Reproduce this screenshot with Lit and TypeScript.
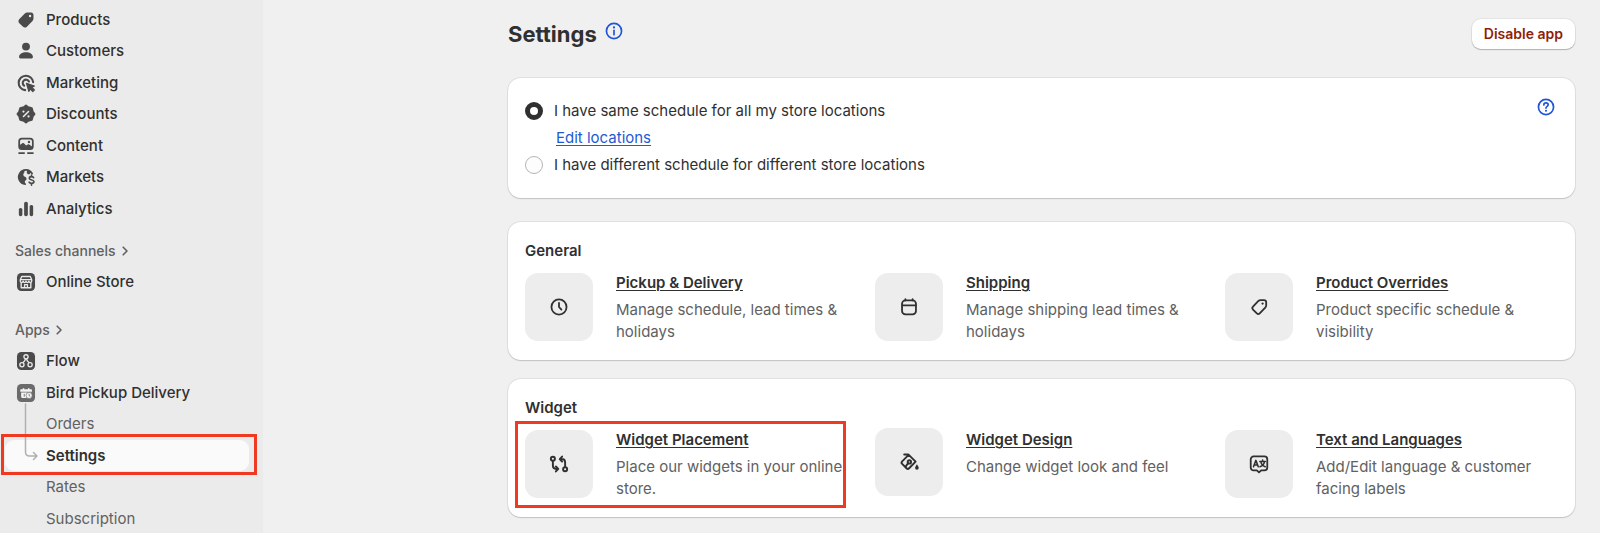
import { LitElement, html, css, svg, nothing } from "lit";
import { customElement, property } from "lit/decorators.js";

const icons: Record<string, unknown> = {
  products: svg`<path fill="currentColor" fill-rule="evenodd" d="M11.600 3.200h3.100c1.200 0 2.100.9 2.100 2.100v3.200c0 .9-.3 1.700-.9 2.300l-5.100 5.300c-1 1-2.500 1-3.500.1l-3.400-3.300c-1-1-1-2.500-.1-3.500l4.900-5c.7-.8 1.800-1.200 2.900-1.200Zm2.100 4.200a1.100 1.100 0 1 0 0-2.200 1.100 1.100 0 0 0 0 2.200Z"/>`,
  customers: svg`<g fill="currentColor"><circle cx="10" cy="6" r="3.600"/><path d="M3.700 15.500c0-2.900 2.800-4.400 6.300-4.400s6.300 1.500 6.300 4.400c0 .8-.5 1.300-1.300 1.300H5c-.8 0-1.300-.5-1.300-1.300Z"/></g>`,
  marketing: svg`<g fill="none" stroke="currentColor" stroke-width="1.900" stroke-linecap="round"><path d="M9.200 16.500A6.600 6.600 0 1 1 16.500 9.200"/><path d="M8.300 12.400A3 3 0 1 1 12.700 8.600"/></g><path fill="currentColor" stroke="currentColor" stroke-width="1" stroke-linejoin="round" d="m10.400 10.300 7.200 2.400-2.200 1.300 2.300 2.300-1.500 1.500-2.300-2.300-1.300 2.200Z"/>`,
  discounts: svg`<path fill="currentColor" stroke="currentColor" stroke-width="1.900" stroke-linejoin="round" d="m10 2.400 2 1.500 3.200.9.900 3.200 1.500 2-1.500 2-.9 3.200-3.200.9-2 1.500-2-1.500-3.200-.9-.9-3.200-1.500-2 1.500-2 .9-3.200 3.200-.9Z"/><path stroke="#ebebeb" stroke-width="1.400" stroke-linecap="round" d="m7.700 12.300 4.600-4.600"/><circle cx="7.700" cy="7.800" r="1" fill="#ebebeb"/><circle cx="12.300" cy="12.200" r="1" fill="#ebebeb"/>`,
  content: svg`<rect x="3.800" y="3.300" width="12.400" height="9.600" rx="2.400" fill="none" stroke="currentColor" stroke-width="1.600"/><path fill="currentColor" d="M4 9.400 6.700 7.500c.5-.3 1-.3 1.400.1l2 2 1.500-1c.4-.3.9-.3 1.300 0l3 2.100-.9 2H5L4 11.500Z"/><circle cx="12.700" cy="6.300" r="1.100" fill="currentColor"/><path stroke="currentColor" stroke-width="1.600" stroke-linecap="round" d="M3.700 16.400h4.600M11.700 16.400h4.600"/>`,
  markets: svg`<path fill="none" stroke="currentColor" stroke-width="1.600" stroke-linecap="round" d="M9.300 16.500A6.500 6.500 0 1 1 15.600 6.900"/><path fill="currentColor" d="M3.300 8.700 5 5.500 8 3.600l.7 1.900-1.200 2 .4 1.700 2.300 1.300.3 1.700-1.600 1.700.3 2.500-2.800-.6-2.500-2.600ZM11.200 3.400l-.6 2.500 1 1.700 1.700-.2 1.200-1.700-1.200-1.800Z"/><path fill="none" stroke="currentColor" stroke-width="1.500" stroke-linecap="round" d="M16.900 10.600c-.4-.7-1.100-.9-1.900-.9-1.200 0-2 .6-2 1.500 0 2.200 4.200.9 4.200 3 0 1-.9 1.600-2.200 1.600-1 0-1.800-.4-2.200-1.100M15 8.300v1.300M15 16v1.500"/>`,
  analytics: svg`<g fill="currentColor"><rect x="3.500" y="9" width="3.200" height="7.500" rx="1.500"/><rect x="8.300" y="3.300" width="3.400" height="13.200" rx="1.600"/><rect x="13.300" y="6.300" width="3.200" height="10.200" rx="1.500"/></g>`,
  store: svg`<rect x="1.800" y="1.800" width="16.400" height="16.400" rx="4" fill="#4a4a4a"/><g fill="none" stroke="#ebebeb" stroke-width="1.200" stroke-linejoin="round"><path d="M6.100 5h7.800l1.300 3v1.200a1.300 1.300 0 0 1-2.600 0 1.300 1.300 0 0 1-2.600 0 1.300 1.300 0 0 1-2.600 0 1.300 1.300 0 0 1-2.600 0V8ZM4.900 7.800h10.200M5.600 10.500v4.700h8.800v-4.700M8.700 15v-2.600h2.600V15"/></g>`,
  flow: svg`<rect x="1.800" y="1.800" width="16.400" height="16.400" rx="4" fill="#4a4a4a"/><g fill="none" stroke="#ebebeb" stroke-width="1.200"><circle cx="10" cy="6.200" r="1.900"/><circle cx="6.300" cy="13.400" r="1.900"/><circle cx="13.700" cy="13.400" r="1.900"/><path d="M9.500 8.100C9.300 10 8.500 10.500 7.100 11.600M10.500 8.100c.2 1.900 1 2.400 2.400 3.500"/></g>`,
  bird: svg`<rect x="1.800" y="1.800" width="16.400" height="16.400" rx="4" fill="#6b6b6b"/><path fill="#f5f5f5" d="M5.700 6.600h1.300V5.700h1.400v.9h3.400v-.9h1.400v.9h1.300c.5 0 .9.4.9.9v1.300H4.800V7.500c0-.5.4-.9.9-.9ZM5.600 9.600h9.200v4.900H6.600c-.6 0-1-.4-1-1Z"/><circle cx="12.800" cy="12.300" r="2.800" fill="#f5f5f5" stroke="#6b6b6b" stroke-width=".6"/><path fill="none" stroke="#6b6b6b" stroke-width=".8" d="M12.800 11v1.400l1 .6M8.400 10.800v2.600"/>`,
  chevron: svg`<path fill="none" stroke="currentColor" stroke-width="1.800" stroke-linecap="round" stroke-linejoin="round" d="m8 5.800 4.200 4.200L8 14.200"/>`,
  info: svg`<circle cx="10" cy="10" r="6.300" fill="none" stroke="currentColor" stroke-width="1.400"/><path stroke="currentColor" stroke-width="1.400" stroke-linecap="round" d="M10 9.500v3.600"/><circle cx="10" cy="7" r=".95" fill="currentColor"/>`,
  help: svg`<circle cx="10" cy="10" r="6.300" fill="none" stroke="currentColor" stroke-width="1.400"/><path fill="none" stroke="currentColor" stroke-width="1.400" stroke-linecap="round" d="M8.200 8.300c0-1 .8-1.700 1.800-1.700s1.800.7 1.800 1.600c0 1.300-1.800 1.300-1.800 2.700"/><circle cx="10" cy="13.100" r=".9" fill="currentColor"/>`,
  clock: svg`<g fill="none" stroke="currentColor" stroke-width="1.500" stroke-linecap="round" stroke-linejoin="round"><circle cx="10" cy="10" r="6.300"/><path d="M10 6.500V10l2 2.200"/></g>`,
  calendar: svg`<g fill="none" stroke="currentColor" stroke-width="1.500" stroke-linecap="round"><rect x="4.200" y="4.400" width="11.600" height="11.800" rx="2.800"/><path d="M4.500 8.600h11M7 3.500v1M13 3.500v1"/></g>`,
  tag: svg`<path fill="none" stroke="currentColor" stroke-width="1.500" stroke-linejoin="round" d="M11.500 4.200h2.600c1.100 0 1.900.8 1.900 1.900v2.400c0 .8-.3 1.500-.8 2.100l-4.600 4.700c-.7.700-1.700.7-2.400 0l-3.200-3.200c-.7-.7-.7-1.700 0-2.400l4.300-4.600c.6-.6 1.400-.9 2.200-.9Z"/><circle cx="13" cy="7.100" r=".95" fill="currentColor"/>`,
  compare: svg`<g fill="none" stroke="currentColor" stroke-width="1.600" stroke-linecap="round" stroke-linejoin="round"><circle cx="4.900" cy="5.600" r="1.700"/><circle cx="15.100" cy="14.400" r="1.700"/><path d="M4.900 7.400v3.900c0 1.800 1.100 2.800 2.800 2.800h1.200M7.400 12 9.400 14.100l-2 2.100M15.100 12.600V8.700c0-1.800-1.100-2.800-2.800-2.800h-1.200M12.600 3.800 10.600 5.900l2 2.100"/></g>`,
  paint: svg`<g fill="none" stroke="currentColor" stroke-width="1.600" stroke-linecap="round" stroke-linejoin="round"><path d="M6 3.800h3.600l5.900 5.900-5.400 5.500c-.7.700-1.500.7-2.200 0l-3.600-3.600c-.7-.7-.7-1.400 0-2.100l5.200-5.200"/><circle cx="10.300" cy="9.900" r="1.400"/><path d="m9.300 11-2 2.600"/></g><path fill="currentColor" d="M16.600 11.800c1 1.400 1.500 2.300 1.500 3.200a1.500 1.500 0 0 1-3 0c0-.9.5-1.800 1.500-3.200Z"/>`,
  language: svg`<g fill="none" stroke="currentColor" stroke-linecap="round" stroke-linejoin="round"><path stroke-width="1.500" d="M5.500 3.700h9a2.400 2.400 0 0 1 2.400 2.400v6.800a2.400 2.400 0 0 1-2.400 2.400h-2.700L10 17l-1.800-1.700H5.500a2.400 2.400 0 0 1-2.400-2.400V6.100a2.400 2.400 0 0 1 2.400-2.400Z"/><path stroke-width="1.300" d="m5.400 12.300 2-5.300 2 5.300M6.200 10.800h2.500M10.700 7.900h4.600M13 6.600v1.300M14.600 8.100c-.3 2-1.700 3.400-3.800 4.200M11.500 8.100c.3 2 1.600 3.400 3.700 4.200"/></g>`,
};

@customElement("ui-icon")
export class UiIcon extends LitElement {
  @property() name = "";

  static styles = css`
    :host {
      display: block;
      flex: none;
      width: 22px;
      height: 22px;
    }
    .glyph {
      display: block;
      width: 100%;
      height: 100%;
    }
  `;

  render() {
    return html`<svg class="glyph" viewBox="0 0 20 20" aria-hidden="true">${icons[this.name] ?? nothing}</svg>`;
  }
}

@customElement("side-nav")
export class SideNav extends LitElement {
  static styles = css`
    :host {
      display: block;
      flex: none;
      box-sizing: border-box;
      width: 263px;
      padding: 4px 14px 0 5px;
      background: #ebebeb;
    }
    .group {
      display: grid;
      grid-auto-rows: 31px 32px;
    }
    .channels {
      margin-top: 11px;
    }
    .apps {
      margin-top: 16px;
    }
    .heading {
      display: flex;
      align-items: center;
      margin: 0;
      padding-left: 10px;
      font-size: 14px;
      font-weight: 500;
      color: #616161;
    }
    .heading ui-icon {
      width: 18px;
      height: 18px;
    }
    .item {
      position: relative;
      display: flex;
      align-items: center;
      gap: 9px;
      padding-left: 10px;
      border-radius: 9px;
      color: #303030;
      font-weight: 500;
      text-decoration: none;
    }
    .item ui-icon {
      color: #4a4a4a;
    }
    .sub {
      padding-left: 41px;
      color: #616161;
      font-weight: 400;
    }
    .current {
      background: #fafafa;
      color: #303030;
      font-weight: 600;
    }
    .branch {
      position: absolute;
      left: 18px;
      bottom: 8px;
      width: 16px;
      height: 60px;
    }
    .highlight {
      position: absolute;
      inset: -6px -8px -4px -4px;
      border: 3px solid #ef3a21;
      pointer-events: none;
    }
  `;

  private item(icon: string, label: string) {
    return html`<a class="item" href="#"><ui-icon name=${icon}></ui-icon>${label}</a>`;
  }

  render() {
    return html`
      <nav>
        <div class="group">
          ${this.item("products", "Products")} ${this.item("customers", "Customers")}
          ${this.item("marketing", "Marketing")} ${this.item("discounts", "Discounts")}
          ${this.item("content", "Content")} ${this.item("markets", "Markets")}
          ${this.item("analytics", "Analytics")}
        </div>
        <div class="group channels">
          <h2 class="heading">Sales channels<ui-icon name="chevron"></ui-icon></h2>
          ${this.item("store", "Online Store")}
        </div>
        <div class="group apps">
          <h2 class="heading">Apps<ui-icon name="chevron"></ui-icon></h2>
          ${this.item("flow", "Flow")} ${this.item("bird", "Bird Pickup Delivery")}
          <a class="item sub" href="#">Orders</a>
          <a class="item sub current" href="#" aria-current="page">
            <svg class="branch" viewBox="0 0 16 60" aria-hidden="true">
              <path
                fill="none"
                stroke="#b0b0b0"
                stroke-width="1.500"
                stroke-linecap="round"
                stroke-linejoin="round"
                d="M2.500 1v48q0 4 4 4h7.500M10.500 49.500 14 53l-3.500 3.500"
              />
            </svg>
            Settings
            <span class="highlight"></span>
          </a>
          <a class="item sub" href="#">Rates</a>
          <a class="item sub" href="#">Subscription</a>
        </div>
      </nav>
    `;
  }
}

interface SettingsLink {
  icon: string;
  title: string;
  text: string;
  highlighted?: boolean;
}

@customElement("settings-card")
export class SettingsCard extends LitElement {
  @property() heading = "";
  @property({ attribute: false }) links: SettingsLink[] = [];

  static styles = css`
    :host {
      display: block;
      padding: 18px 17px 17px;
      border-radius: 13px;
      background: #fff;
      box-shadow: 0 1px 1px #c4c4c4, 0 0 0 1px #e0e0e0;
    }
    .heading {
      margin: 0 0 9px;
      font-size: 15px;
      line-height: 22px;
      font-weight: 600;
    }
    .grid {
      display: grid;
      grid-template-columns: repeat(3, minmax(0, 1fr));
      align-items: start;
      gap: 17px;
    }
    .entry {
      position: relative;
      display: flex;
      gap: 23px;
    }
    .tile {
      display: grid;
      place-items: center;
      align-self: center;
      flex: none;
      width: 68px;
      height: 68px;
      border-radius: 13px;
      background: #ededed;
    }
    .tile ui-icon {
      width: 24px;
      height: 24px;
    }
    .title {
      display: block;
      width: fit-content;
      margin-bottom: 4px;
      line-height: 24px;
      font-weight: 600;
      color: inherit;
      text-decoration: underline;
      text-underline-offset: 2px;
    }
    .text {
      margin: 0;
      line-height: 22px;
      color: #616161;
    }
    .highlight {
      position: absolute;
      inset: -7px 12px -8px -10px;
      border: 3px solid #ef3a21;
      pointer-events: none;
    }
  `;

  render() {
    return html`
      <h2 class="heading">${this.heading}</h2>
      <div class="grid">
        ${this.links.map(
          (link) => html`
            <div class="entry">
              <div class="tile"><ui-icon name=${link.icon}></ui-icon></div>
              <div>
                <a class="title" href="#">${link.title}</a>
                <p class="text">${link.text}</p>
              </div>
              ${link.highlighted ? html`<span class="highlight"></span>` : nothing}
            </div>
          `,
        )}
      </div>
    `;
  }
}

@customElement("app-root")
export class AppRoot extends LitElement {
  static styles = css`
    :host {
      display: flex;
      height: 100vh;
      overflow: hidden;
      background: #f0f0f0;
      color: #303030;
      font: 15px/22px Inter, "Liberation Sans", sans-serif;
    }
    .main {
      flex: 1;
      min-width: 0;
      padding: 19px 25px 0;
    }
    .page {
      max-width: 1067px;
      margin-left: auto;
    }
    .header {
      display: flex;
      align-items: center;
      gap: 5px;
      margin-bottom: 29px;
    }
    .title {
      margin: 0;
      font-size: 22px;
      line-height: 30px;
      font-weight: 700;
    }
    .icon-button {
      padding: 0;
      border: 0;
      background: none;
      color: #1f55d6;
    }
    .icon-button ui-icon {
      width: 24px;
      height: 24px;
    }
    .about {
      align-self: flex-start;
    }
    .disable {
      margin-left: auto;
      padding: 0 12px;
      border: 0;
      border-radius: 9px;
      background: #fff;
      box-shadow: 0 1px 1px #b0b0b0, 0 0 0 1px #e3e3e3;
      color: #8e1f0b;
      font: 600 14px/30px Inter, "Liberation Sans", sans-serif;
    }
    .schedule {
      display: flex;
      justify-content: space-between;
      align-items: flex-start;
      margin-bottom: 24px;
      padding: 17px;
      border-radius: 13px;
      background: #fff;
      box-shadow: 0 1px 1px #c4c4c4, 0 0 0 1px #e0e0e0;
    }
    .options {
      display: grid;
      gap: 5px;
      margin: 0;
      padding: 5px 0;
      border: 0;
    }
    .option {
      display: flex;
      align-items: center;
      gap: 11px;
    }
    .radio {
      appearance: none;
      box-sizing: border-box;
      width: 18px;
      height: 18px;
      margin: 0;
      border: 1px solid #b5b5b5;
      border-radius: 50%;
      background: #fdfdfd;
    }
    .radio:checked {
      border: 5px solid #303030;
      background: #fff;
    }
    .edit {
      width: fit-content;
      margin-left: 31px;
      color: #1f5ad2;
      text-underline-offset: 2px;
    }
    .cards {
      display: grid;
      gap: 19px;
    }
  `;

  private general: SettingsLink[] = [
    { icon: "clock", title: "Pickup & Delivery", text: "Manage schedule, lead times & holidays" },
    { icon: "calendar", title: "Shipping", text: "Manage shipping lead times & holidays" },
    { icon: "tag", title: "Product Overrides", text: "Product specific schedule & visibility" },
  ];

  private widget: SettingsLink[] = [
    { icon: "compare", title: "Widget Placement", text: "Place our widgets in your online store.", highlighted: true },
    { icon: "paint", title: "Widget Design", text: "Change widget look and feel" },
    { icon: "language", title: "Text and Languages", text: "Add/Edit language & customer facing labels" },
  ];

  render() {
    return html`
      <side-nav></side-nav>
      <main class="main">
        <div class="page">
          <header class="header">
            <h1 class="title">Settings</h1>
            <button class="icon-button about" aria-label="About settings"><ui-icon name="info"></ui-icon></button>
            <button class="disable">Disable app</button>
          </header>
          <section class="schedule">
            <fieldset class="options" aria-label="Schedule">
              <label class="option">
                <input class="radio" type="radio" name="schedule" checked />
                I have same schedule for all my store locations
              </label>
              <a class="edit" href="#">Edit locations</a>
              <label class="option">
                <input class="radio" type="radio" name="schedule" />
                I have different schedule for different store locations
              </label>
            </fieldset>
            <button class="icon-button" aria-label="Help"><ui-icon name="help"></ui-icon></button>
          </section>
          <div class="cards">
            <settings-card heading="General" .links=${this.general}></settings-card>
            <settings-card heading="Widget" .links=${this.widget}></settings-card>
          </div>
        </div>
      </main>
    `;
  }
}
